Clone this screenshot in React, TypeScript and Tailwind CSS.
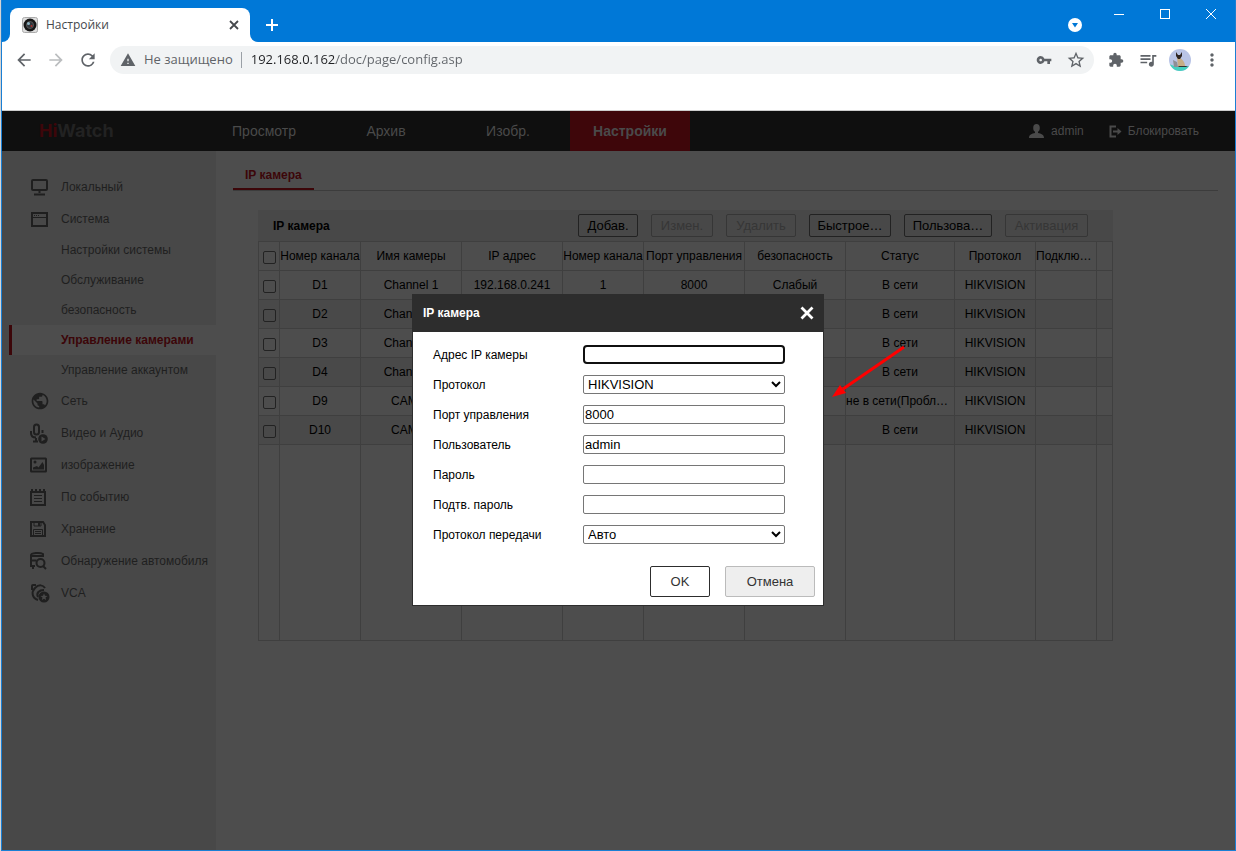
import React from 'react'
import { MdArrowBack, MdArrowForward, MdRefresh, MdWarning, MdVpnKey, MdStarBorder, MdExtension, MdQueueMusic, MdMoreVert, MdPublic } from 'react-icons/md'

type IconProps = { className?: string }

const MonitorIcon = () => (
  <svg width='20' height='20' viewBox='0 0 20 20' fill='none' stroke='currentColor' strokeWidth='2' aria-hidden='true'>
    <rect x='2' y='3' width='15' height='10' rx='1' />
    <path d='M9.5 13v3M4 17.5h11' />
  </svg>
)

const WindowIcon = () => (
  <svg width='20' height='20' viewBox='0 0 20 20' fill='none' stroke='currentColor' aria-hidden='true'>
    <rect x='2' y='4' width='15' height='13' strokeWidth='2' />
    <path d='M3 8.500h13' />
    <path d='M4 6.500h1M6 6.500h1M8 6.500h1' />
  </svg>
)

const MicIcon = () => (
  <svg width='20' height='21' viewBox='0 0 20 21' aria-hidden='true'>
    <g fill='none' stroke='currentColor' strokeWidth='2'>
      <rect x='4' y='1.500' width='5' height='10' rx='2.500' />
      <path d='M1 8v2c0 3 2 4.500 5 4.500M12.500 7v3M6 15v3M3 18.500h5' />
    </g>
    <circle cx='13' cy='16' r='4.800' fill='currentColor' />
    <path d='M11.500 13.500l4 2.500-4 2.500z' fill='#484848' />
  </svg>
)

const PictureIcon = () => (
  <svg width='20' height='20' viewBox='0 0 20 20' aria-hidden='true'>
    <rect x='1' y='3.500' width='15' height='13' rx='.5' fill='none' stroke='currentColor' strokeWidth='2' />
    <circle cx='5' cy='7' r='1.500' fill='currentColor' />
    <path d='M3 14.500v-2l4-1.500 1.500 1.500 4-5.500 1.500 3v4.500z' fill='currentColor' />
  </svg>
)

const NoteIcon = () => (
  <svg width='20' height='20' viewBox='0 0 20 20' fill='none' stroke='currentColor' aria-hidden='true'>
    <rect x='1' y='5' width='14' height='13' strokeWidth='2' />
    <path d='M2 2v2M6 2v2M10 2v2M14 2v2' strokeWidth='2' />
    <path d='M4 8.500h8M4 11.500h8M4 14.500h8' />
  </svg>
)

const FloppyIcon = () => (
  <svg width='20' height='20' viewBox='0 0 20 20' fill='none' stroke='currentColor' aria-hidden='true'>
    <path d='M1 3h12l2 3v11H1z' strokeWidth='2' />
    <path d='M4 3v4h7V3' />
    <path d='M9 3v4' strokeWidth='2' />
    <path d='M3.500 16v-5.500h9V16M5 12.500h6M5 14.500h6' />
  </svg>
)

const CarIcon = () => (
  <svg width='20' height='20' viewBox='0 0 20 20' aria-hidden='true'>
    <g fill='none' stroke='currentColor' strokeWidth='2'>
      <path d='M1 9V4c0-2 9-3 12-1v3M.5 9.500h6M1 9v6h4M3 15v3M2 5h10' />
      <circle cx='10.500' cy='12' r='4' />
      <path d='M13 15l3 3' />
    </g>
  </svg>
)

const VcaIcon = () => (
  <svg width='20' height='20' viewBox='0 0 20 20' aria-hidden='true'>
    <g fill='none' stroke='currentColor' strokeWidth='2'>
      <path d='M2 7V3c0-.6.4-1 1-1h3' />
      <path d='M8 17C2 15 1 9 5 5s8-3 10 0' />
      <path d='M8 14c-2-4 1-7 6-7' />
    </g>
    <circle cx='14' cy='14' r='5.500' fill='currentColor' />
    <path d='M14 10.500l1 2.300 2.500.2-2 1.600.7 2.400-2.200-1.300-2.200 1.300.7-2.400-2-1.600 2.500-.2z' fill='#484848' />
  </svg>
)

const UserIcon = () => (
  <svg width='15' height='14' viewBox='0 0 15 14' fill='currentColor' aria-hidden='true'>
    <ellipse cx='7.500' cy='4' rx='3.300' ry='4' />
    <path d='M6 7h3v2c3 .6 6 1.500 6 5H0c0-3.500 3-4.400 6-5z' />
  </svg>
)

const LogoutIcon = ({ className }: IconProps) => (
  <svg className={className} width='13' height='13' viewBox='0 0 13 13' fill='none' stroke='currentColor' strokeWidth='2' aria-hidden='true'>
    <path d='M7 1.500H1.500v10H7M4 6.500h6' />
    <path d='M8.500 3v7l4-3.500z' fill='currentColor' stroke='none' />
  </svg>
)

const systemItems = ['Настройки системы', 'Обслуживание', 'безопасность', 'Управление камерами', 'Управление аккаунтом']

const menuItems = [
  { label: 'Сеть', icon: <MdPublic className='w-5 h-5' /> },
  { label: 'Видео и Аудио', icon: <MicIcon /> },
  { label: 'изображение', icon: <PictureIcon /> },
  { label: 'По событию', icon: <NoteIcon /> },
  { label: 'Хранение', icon: <FloppyIcon /> },
  { label: 'Обнаружение автомобиля', icon: <CarIcon /> },
  { label: 'VCA', icon: <VcaIcon /> },
]

const columns = ['Номер канала', 'Имя камеры', 'IP адрес', 'Номер канала', 'Порт управления', 'безопасность', 'Статус', 'Протокол', 'Подклю…', '']

const cameras = [
  ['D1', 'Channel 1', '192.168.0.241', '1', '8000', 'Слабый', 'В сети', 'HIKVISION'],
  ['D2', 'Channel 1', '', '', '', '', 'В сети', 'HIKVISION'],
  ['D3', 'Channel 1', '', '', '', '', 'В сети', 'HIKVISION'],
  ['D4', 'Channel 1', '', '', '', '', 'В сети', 'HIKVISION'],
  ['D9', 'CAM01', '', '', '', '', 'не в сети(Пробл…', 'HIKVISION'],
  ['D10', 'CAM02', '', '', '', '', 'В сети', 'HIKVISION'],
]

const toolButtons = [
  { label: 'Добав.', width: 'w-[60px]', disabled: false },
  { label: 'Измен.', width: 'w-[62px]', disabled: true },
  { label: 'Удалить', width: 'w-[70px]', disabled: true },
  { label: 'Быстрое…', width: 'w-[82px]', disabled: false },
  { label: 'Пользова…', width: 'w-[88px]', disabled: false },
  { label: 'Активация', width: 'w-[83px]', disabled: true },
]

const Checkbox = ({ label }: { label: string }) => (
  <input type='checkbox' aria-label={label} className='block mx-auto mt-0.5 w-[13px] h-[13px] appearance-none rounded-xs border border-[#222]' />
)

const TitleBar = () => (
  <div className='flex items-end h-[42px] bg-[#0078d7] text-white'>
    <div className='w-2 h-2 bg-white'>
      <div className='w-2 h-2 bg-[#0078d7] rounded-br-lg'></div>
    </div>
    <div className='flex items-center w-60 h-[34px] bg-white rounded-t-lg pl-3 pr-[10px]'>
      <svg width='16' height='16' viewBox='0 0 16 16' aria-hidden='true'>
        <rect x='.5' y='.5' width='15' height='15' rx='2' fill='#ddd' stroke='#aaa' />
        <circle cx='8' cy='8' r='6.500' fill='#161616' />
        <circle cx='8' cy='8' r='3.500' fill='#30363c' stroke='#555' />
        <circle cx='6.500' cy='6.500' r='1.500' fill='#8fb5c4' />
        <circle cx='9.500' cy='9' r='1' fill='#b3302c' />
      </svg>
      <span className="ml-2 font-['Open_Sans',sans-serif] text-xs text-[#45484c]">Настройки</span>
      <button aria-label='Закрыть вкладку' className='ml-auto text-[#45484c]'>
        <svg width='12' height='12' viewBox='0 0 12 12' stroke='currentColor' strokeWidth='1.800'>
          <path d='M2 2l8 8M10 2l-8 8' />
        </svg>
      </button>
    </div>
    <div className='w-2 h-2 bg-white'>
      <div className='w-2 h-2 bg-[#0078d7] rounded-bl-lg'></div>
    </div>
    <button aria-label='Новая вкладка' className='ml-2 mb-[11px]'>
      <svg width='12' height='12' viewBox='0 0 12 12' stroke='currentColor' strokeWidth='2'>
        <path d='M6 0v12M0 6h12' />
      </svg>
    </button>
    <button aria-label='Поиск вкладок' className='ml-auto mb-[10px]'>
      <svg width='14' height='14' viewBox='0 0 14 14'>
        <circle cx='7' cy='7' r='7' fill='#fff' />
        <path d='M4 5h6L7 9.500z' fill='#0078d7' />
      </svg>
    </button>
    <div className='flex self-start pt-2 ml-[31px] mr-[18px] gap-[34px]'>
      <button aria-label='Свернуть'>
        <svg width='12' height='12' viewBox='0 0 12 12' stroke='currentColor'><path d='M1 6.500h10' /></svg>
      </button>
      <button aria-label='Развернуть'>
        <svg width='12' height='12' viewBox='0 0 12 12' stroke='currentColor' fill='none'><rect x='1.500' y='1.500' width='9' height='9' /></svg>
      </button>
      <button aria-label='Закрыть'>
        <svg width='12' height='12' viewBox='0 0 12 12' stroke='currentColor'><path d='M1 1l10 10M11 1L1 11' /></svg>
      </button>
    </div>
  </div>
)

const AddressBar = () => (
  <div className="flex items-center h-9 mb-8 pl-3 pr-[13px] bg-white text-[#5f6368] font-['Open_Sans',sans-serif] text-[13px]">
    <button aria-label='Назад'><MdArrowBack className='w-5 h-5' /></button>
    <button aria-label='Вперед' className='ml-3 text-[#bbbdbf]'><MdArrowForward className='w-5 h-5' /></button>
    <button aria-label='Обновить' className='ml-3'><MdRefresh className='w-5 h-5' /></button>
    <div className='flex items-center flex-1 h-7 ml-3 pl-[10px] pr-2 rounded-full bg-[#f1f3f4]'>
      <MdWarning className='w-4 h-4' />
      <span className='ml-2'>Не защищено</span>
      <span className='w-px h-4 ml-2 mr-[9px] bg-[#9aa0a6]'></span>
      {/* Host part is darker than the path */}
      <input
        aria-label='Адрес'
        defaultValue='192.168.0.162/doc/page/config.asp'
        className='flex-1 min-w-0 outline-none bg-linear-to-r from-[#202124] from-[85px] to-[#5f6368] to-[85px] bg-clip-text text-transparent'
      />
      <button aria-label='Пароли'><MdVpnKey className='w-4 h-4' /></button>
      <button aria-label='В закладки' className='ml-[14px]'><MdStarBorder className='w-5 h-5' /></button>
    </div>
    <button aria-label='Расширения' className='ml-[14px]'><MdExtension className='w-4 h-4' /></button>
    <button aria-label='Медиа' className='ml-[14px]'><MdQueueMusic className='w-5 h-5' /></button>
    <button aria-label='Профиль' className='ml-[11px]'>
      <svg width='22' height='22' viewBox='0 0 22 22'>
        <clipPath id='avatar'><circle cx='11' cy='11' r='11' /></clipPath>
        <g clipPath='url(#avatar)'>
          <rect width='22' height='22' fill='#b9c4e6' />
          <path d='M0 15l8 3 14-1v5H0z' fill='#45d0c0' />
          <path d='M8 8l3 1c3 2 5 4 5 9H9z' fill='#c7ad85' />
          <path d='M7 3l2 3h2l2-3v4l-2 3H9L7 7z' fill='#2d2422' />
          <path d='M4 11l4 2 1 5H5z' fill='#8e8f96' />
          <path d='M9 17h8l2 1h-9z' fill='#333' />
        </g>
      </svg>
    </button>
    <button aria-label='Меню' className='ml-[11px]'><MdMoreVert className='w-5 h-5' /></button>
  </div>
)

const TopNav = () => (
  <header className='flex items-center h-10 bg-[#0f0f0f] text-[#4a4a4a] text-sm'>
    <div className="w-[202px] pl-[37px] font-['Inter',sans-serif] text-lg font-bold text-[#222]">
      <span className='text-[#3d060a]'>Hi</span>Watch
    </div>
    <nav className='flex h-full'>
      {['Просмотр', 'Архив', 'Изобр.'].map((item) => (
        <a key={item} href='#' className='flex items-center justify-center w-[122px] pr-0.5'>{item}</a>
      ))}
      <a href='#' className='flex items-center justify-center w-[120px] bg-[#3e060a] font-bold'>Настройки</a>
    </nav>
    <div className='flex items-center ml-auto mr-9 text-xs'>
      <UserIcon />
      <span className='ml-[7px]'>admin</span>
      <a href='#' className='flex items-center ml-[25px]'>
        <LogoutIcon className='mr-[6px]' />
        Блокировать
      </a>
    </div>
  </header>
)

const Sidebar = () => (
  <aside className='w-[214px] shrink-0 pt-5 bg-[#484848] text-[#1f1f1f] text-xs'>
    <a href='#' className='flex items-center h-8 pl-7 gap-[11px]'><MonitorIcon />Локальный</a>
    <a href='#' className='flex items-center h-8 pl-7 gap-[11px]'><WindowIcon />Система</a>
    {systemItems.map((item) => (
      <a
        key={item}
        href='#'
        className={item === 'Управление камерами'
          ? 'flex items-center h-[30px] ml-[7px] pl-[49px] border-l-[3px] border-[#3c0609] bg-[#4d4d4d] text-[#3c0609] font-bold'
          : 'flex items-center h-[30px] pl-[59px]'}
      >
        {item}
      </a>
    ))}
    {menuItems.map((item) => (
      <a key={item.label} href='#' className='flex items-center h-8 pl-7 gap-[11px]'>
        {item.icon}
        <span className='whitespace-nowrap'>{item.label}</span>
      </a>
    ))}
  </aside>
)

const CameraTable = () => (
  <section className='w-[855px] mt-[19px] ml-[25px]'>
    <div className='flex items-center h-[31px] pl-[15px] pr-[25px] bg-[#484848]'>
      <h2 className='text-xs font-bold text-black'>IP камера</h2>
      <div className='flex ml-auto gap-[13px]'>
        {toolButtons.map((btn) => (
          <button
            key={btn.label}
            disabled={btn.disabled}
            className={`${btn.width} h-[23px] border rounded-xs text-[13px] ${btn.disabled ? 'border-[#363636] text-[#363636]' : 'border-[#222] text-black'}`}
          >
            {btn.label}
          </button>
        ))}
      </div>
    </div>
    <table className='w-full table-fixed border-collapse text-xs text-black text-center whitespace-nowrap'>
      <colgroup>
        <col className='w-[21px]' />
        <col className='w-[81px]' />
        <col className='w-[101px]' />
        <col className='w-[101px]' />
        <col className='w-[81px]' />
        <col className='w-[101px]' />
        <col className='w-[101px]' />
        <col className='w-[109px]' />
        <col className='w-[81px]' />
        <col className='w-[61px]' />
        <col className='w-4' />
      </colgroup>
      <thead>
        <tr className='h-[29px]'>
          <th className='border border-[#3f3f3f]'><Checkbox label='Выбрать все' /></th>
          {columns.map((col, i) => (
            <th key={i} className={`border border-[#3f3f3f] font-normal overflow-hidden ${col.endsWith('…') ? 'text-left' : ''}`}>{col}</th>
          ))}
        </tr>
      </thead>
      <tbody>
        {cameras.map((row, r) => (
          <tr key={row[0]} className={`h-[29px] ${r % 2 ? 'bg-[#494949]' : ''}`}>
            <td className='border border-[#3f3f3f]'><Checkbox label={row[0]} /></td>
            {columns.map((_, i) => (
              <td key={i} className={`border border-[#3f3f3f] overflow-hidden ${row[i]?.endsWith('…') ? 'text-left' : ''}`}>{row[i]}</td>
            ))}
          </tr>
        ))}
        <tr className='h-[196px]'>
          <td className='border border-[#3f3f3f]'></td>
          {columns.map((_, i) => (
            <td key={i} className='border border-[#3f3f3f]'></td>
          ))}
        </tr>
      </tbody>
    </table>
  </section>
)

const fields = [
  { id: 'address', label: 'Адрес IP камеры', type: 'text', value: '' },
  { id: 'protocol', label: 'Протокол', type: 'select', value: 'HIKVISION' },
  { id: 'port', label: 'Порт управления', type: 'text', value: '8000' },
  { id: 'user', label: 'Пользователь', type: 'text', value: 'admin' },
  { id: 'password', label: 'Пароль', type: 'password', value: '' },
  { id: 'confirm', label: 'Подтв. пароль', type: 'password', value: '' },
  { id: 'transport', label: 'Протокол передачи', type: 'select', value: 'Авто' },
]

const AddCameraDialog = () => (
  <div role='dialog' aria-labelledby='dialog-title' className='absolute left-[410px] top-[183px] w-[412px] border border-t-0 border-[#2d2d2d] bg-white text-black'>
    <div className='flex items-center justify-between h-[38px] pl-[10px] pr-[9px] bg-[#2d2d2d] text-white'>
      <h2 id='dialog-title' className='text-xs font-bold'>IP камера</h2>
      <button aria-label='Закрыть окно'>
        <svg width='14' height='14' viewBox='0 0 14 14' stroke='currentColor' strokeWidth='2.800'>
          <path d='M1.500 1.500l11 11M12.500 1.500l-11 11' />
        </svg>
      </button>
    </div>
    <form className='pt-2 px-5'>
      {fields.map((field) => (
        <div key={field.id} className='flex items-center h-[30px]'>
          <label htmlFor={field.id} className='w-[150px] text-xs'>{field.label}</label>
          {field.type === 'select' ? (
            <select id={field.id} defaultValue={field.value} className='w-[202px] h-[19px] mb-px border border-[#767676] rounded-xs bg-white text-[13px]'>
              <option>{field.value}</option>
            </select>
          ) : (
            <input
              id={field.id}
              type={field.type}
              defaultValue={field.value}
              className={`w-[202px] h-[19px] mb-px px-px text-[13px] outline-none ${field.id === 'address' ? 'rounded-sm border-2 border-[#101010]' : 'rounded-xs border border-[#767676]'}`}
            />
          )}
        </div>
      ))}
    </form>
    <div className='flex justify-end gap-[15px] pt-4 pr-2 pb-2 text-[13px] text-[#333]'>
      <button className='w-[60px] h-[31px] border border-[#2d2d2d] rounded-xs bg-white'>OK</button>
      <button className='w-[90px] h-[31px] border border-[#bbb] rounded-xs bg-[#eee]'>Отмена</button>
    </div>
  </div>
)

const App = () => {
  return (
    <div className='min-h-screen flex pl-px bg-[#d4d4d4]'>
      <div className="flex flex-col flex-1 min-w-0 bg-white border-x border-b border-[#1a7fd4] font-['Liberation_Sans',Arial,sans-serif]">
        <TitleBar />
        <AddressBar />
        <div className='relative flex flex-col flex-1 border-t border-[#ccc]'>
          <TopNav />
          <div className='flex flex-1'>
            <Sidebar />
            <main className='flex-1 min-w-0 bg-[#4d4d4d] px-[17px] pt-2'>
              <div className='flex h-8 border-b border-[#3c3c3c]'>
                <a href='#' className='flex items-center px-3 pt-0.5 border-b-2 border-[#3c0609] text-[#3c0609] text-xs font-bold'>IP камера</a>
              </div>
              <CameraTable />
            </main>
          </div>
          <AddCameraDialog />
          {/* Arrow that points at the dialog */}
          <svg className='absolute left-[829px] top-[232px] text-[#f00]' width='76' height='58' viewBox='0 0 76 58' aria-hidden='true'>
            <path d='M73 4L12 46' stroke='currentColor' strokeWidth='3' fill='none' />
            <path d='M1 54L9 42l6 8z' fill='currentColor' />
          </svg>
        </div>
      </div>
    </div>
  )
}

export default App
